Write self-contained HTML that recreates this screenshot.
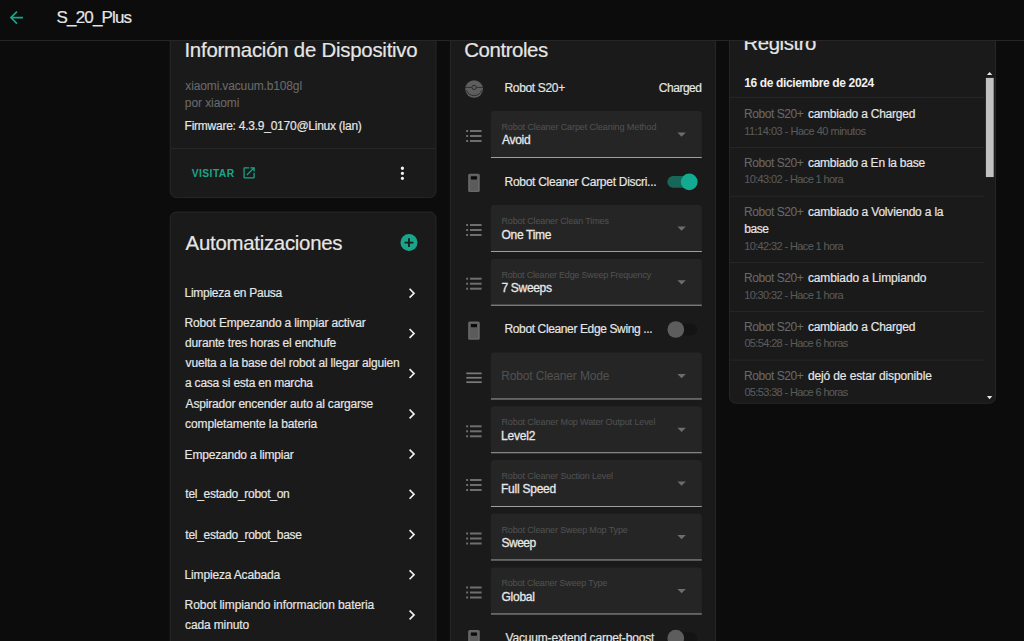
<!DOCTYPE html>
<html lang="es"><head><meta charset="utf-8"><title>S_20_Plus</title>
<style>
html,body{margin:0;padding:0;background:#0c0c0c;}
body{width:1024px;height:641px;overflow:hidden;position:relative;font-family:"Liberation Sans", sans-serif;color:#e6e6e6;font-size:12px;}
.abs,.card,.t,.sel,.hr{position:absolute;}
.t{white-space:nowrap;line-height:1;}
.card{background:#1a1a1a;border:1px solid #2b2b2b;border-radius:8px;box-sizing:border-box;}
.hdr{position:absolute;left:0;top:0;width:1024px;height:40px;background:#0c0c0c;border-bottom:1px solid #262626;z-index:5;}
.sel{left:491px;width:211px;height:46px;background:#262626;border-radius:4px 4px 0 0;border-bottom:1px solid #b4b4b4;box-sizing:content-box;}
.hr{height:1px;background:#2a2a2a;}
svg{position:absolute;overflow:visible;}

</style></head><body>
<svg style="left:0;top:0" width="1024" height="641" viewBox="0 0 1024 641"><rect x="170.22" y="10.42" width="265.76" height="187.16" rx="6.2" fill="#1a1a1a" stroke="#2b2b2b" stroke-width="0.84"/><rect x="170.22" y="212.02" width="265.76" height="487.56" rx="6.2" fill="#1a1a1a" stroke="#2b2b2b" stroke-width="0.84"/><rect x="450.42" y="10.42" width="265.16" height="689.16" rx="6.2" fill="#1a1a1a" stroke="#2b2b2b" stroke-width="0.84"/><rect x="729.52" y="10.42" width="265.96" height="392.86" rx="6.2" fill="#1a1a1a" stroke="#2b2b2b" stroke-width="0.84"/><rect x="170.60" y="148.00" width="265.00" height="0.84" fill="#2a2a2a"/><g transform="translate(241.56 165.26) scale(0.6279166666666667)"><path fill="#1aa58a" d="M14,3V5H17.59L7.76,14.83L9.17,16.24L19,6.41V10H21V3M19,19H5V5H12V3H5C3.89,3 3,3.9 3,5V19A2,2 0 0,0 5,21H19A2,2 0 0,0 21,19V12H19V19Z"/></g><g transform="translate(392.35 163.25) scale(0.8375)"><path fill="#f0f0f0" d="M12,16A2,2 0 0,1 14,18A2,2 0 0,1 12,20A2,2 0 0,1 10,18A2,2 0 0,1 12,16M12,10A2,2 0 0,1 14,12A2,2 0 0,1 12,14A2,2 0 0,1 10,12A2,2 0 0,1 12,10M12,4A2,2 0 0,1 14,6A2,2 0 0,1 12,8A2,2 0 0,1 10,6A2,2 0 0,1 12,4Z"/></g><g transform="translate(397.00 230.60) scale(1)"><circle cx="12" cy="12" r="8.5" fill="#1aa58a"/><path d="M12 7.6v8.8M7.6 12h8.8" stroke="#1a1a1a" stroke-width="1.8" fill="none"/></g><g transform="translate(401.80 283.15) scale(0.8375)"><path fill="#efefef" d="M8.59,16.58L13.17,12L8.59,7.41L10,6L16,12L10,18L8.59,16.58Z"/></g><g transform="translate(401.80 323.35) scale(0.8375)"><path fill="#efefef" d="M8.59,16.58L13.17,12L8.59,7.41L10,6L16,12L10,18L8.59,16.58Z"/></g><g transform="translate(401.80 363.55) scale(0.8375)"><path fill="#efefef" d="M8.59,16.58L13.17,12L8.59,7.41L10,6L16,12L10,18L8.59,16.58Z"/></g><g transform="translate(401.80 403.85) scale(0.8375)"><path fill="#efefef" d="M8.59,16.58L13.17,12L8.59,7.41L10,6L16,12L10,18L8.59,16.58Z"/></g><g transform="translate(401.80 444.05) scale(0.8375)"><path fill="#efefef" d="M8.59,16.58L13.17,12L8.59,7.41L10,6L16,12L10,18L8.59,16.58Z"/></g><g transform="translate(401.80 484.25) scale(0.8375)"><path fill="#efefef" d="M8.59,16.58L13.17,12L8.59,7.41L10,6L16,12L10,18L8.59,16.58Z"/></g><g transform="translate(401.80 524.55) scale(0.8375)"><path fill="#efefef" d="M8.59,16.58L13.17,12L8.59,7.41L10,6L16,12L10,18L8.59,16.58Z"/></g><g transform="translate(401.80 564.75) scale(0.8375)"><path fill="#efefef" d="M8.59,16.58L13.17,12L8.59,7.41L10,6L16,12L10,18L8.59,16.58Z"/></g><g transform="translate(401.80 604.95) scale(0.8375)"><path fill="#efefef" d="M8.59,16.58L13.17,12L8.59,7.41L10,6L16,12L10,18L8.59,16.58Z"/></g><g transform="translate(463.60 78.50) scale(0.875)"><circle cx="12" cy="12" r="10.1" fill="#5e5e5e"/><path d="M2 10.2H9.3M14.7 10.2H22" stroke="#1a1a1a" stroke-width=".75" fill="none"/><circle cx="12" cy="10.2" r="2.45" fill="none" stroke="#1a1a1a" stroke-width=".85"/><path d="M3.31 13.36A9.25 9.25 0 0 0 20.69 13.36" stroke="#1a1a1a" stroke-width=".8" fill="none"/></g><path fill="#252525" d="M490.9 157.90V114.40a3.4 3.4 0 0 1 3.4 -3.4H698.40a3.4 3.4 0 0 1 3.4 3.4V157.90z"/><rect x="490.90" y="157.05" width="210.90" height="0.84" fill="#b6b6b6"/><rect x="466.15" y="130.00" width="2.00" height="2.00" fill="#6e6e6e"/><rect x="470.00" y="130.00" width="11.60" height="2.00" fill="#6e6e6e"/><rect x="466.15" y="135.00" width="2.00" height="2.00" fill="#6e6e6e"/><rect x="470.00" y="135.00" width="11.60" height="2.00" fill="#6e6e6e"/><rect x="466.15" y="140.00" width="2.00" height="2.00" fill="#6e6e6e"/><rect x="470.00" y="140.00" width="11.60" height="2.00" fill="#6e6e6e"/><path fill="#6d6d6d" d="M677.4 132.50h8.4l-4.2 4.3z"/><rect x="468.15" y="173.70" width="11.60" height="18.40" fill="#676767" rx="1.6"/><rect x="469.95" y="175.50" width="8.00" height="15.00" fill="#5b5b5b"/><rect x="470.90" y="176.20" width="6.10" height="3.25" fill="#0b0b0b" rx="0.4"/><rect x="667.30" y="176.00" width="28.00" height="11.80" fill="#176759" rx="5.9"/><circle cx="689.25" cy="181.80" r="8.35" fill="#12ab92"/><path fill="#252525" d="M490.9 251.90V208.40a3.4 3.4 0 0 1 3.4 -3.4H698.40a3.4 3.4 0 0 1 3.4 3.4V251.90z"/><rect x="490.90" y="251.05" width="210.90" height="0.84" fill="#b6b6b6"/><rect x="466.15" y="224.00" width="2.00" height="2.00" fill="#6e6e6e"/><rect x="470.00" y="224.00" width="11.60" height="2.00" fill="#6e6e6e"/><rect x="466.15" y="229.00" width="2.00" height="2.00" fill="#6e6e6e"/><rect x="470.00" y="229.00" width="11.60" height="2.00" fill="#6e6e6e"/><rect x="466.15" y="234.00" width="2.00" height="2.00" fill="#6e6e6e"/><rect x="470.00" y="234.00" width="11.60" height="2.00" fill="#6e6e6e"/><path fill="#6d6d6d" d="M677.4 226.50h8.4l-4.2 4.3z"/><path fill="#252525" d="M490.9 305.60V262.10a3.4 3.4 0 0 1 3.4 -3.4H698.40a3.4 3.4 0 0 1 3.4 3.4V305.60z"/><rect x="490.90" y="304.75" width="210.90" height="0.84" fill="#b6b6b6"/><rect x="466.15" y="277.70" width="2.00" height="2.00" fill="#6e6e6e"/><rect x="470.00" y="277.70" width="11.60" height="2.00" fill="#6e6e6e"/><rect x="466.15" y="282.70" width="2.00" height="2.00" fill="#6e6e6e"/><rect x="470.00" y="282.70" width="11.60" height="2.00" fill="#6e6e6e"/><rect x="466.15" y="287.70" width="2.00" height="2.00" fill="#6e6e6e"/><rect x="470.00" y="287.70" width="11.60" height="2.00" fill="#6e6e6e"/><path fill="#6d6d6d" d="M677.4 280.20h8.4l-4.2 4.3z"/><rect x="468.15" y="321.40" width="11.60" height="18.40" fill="#676767" rx="1.6"/><rect x="469.95" y="323.20" width="8.00" height="15.00" fill="#5b5b5b"/><rect x="470.90" y="323.90" width="6.10" height="3.25" fill="#0b0b0b" rx="0.4"/><rect x="669.00" y="323.70" width="28.20" height="11.60" fill="#141414" rx="5.8"/><circle cx="675.8" cy="329.50" r="8.35" fill="#5d5d5d"/><path fill="#252525" d="M490.9 399.40V355.90a3.4 3.4 0 0 1 3.4 -3.4H698.40a3.4 3.4 0 0 1 3.4 3.4V399.40z"/><rect x="490.90" y="398.55" width="210.90" height="0.84" fill="#b6b6b6"/><rect x="466.30" y="372.50" width="15.40" height="1.75" fill="#7a7a7a"/><rect x="466.30" y="376.90" width="15.40" height="1.75" fill="#7a7a7a"/><rect x="466.30" y="381.30" width="15.40" height="1.75" fill="#7a7a7a"/><path fill="#6d6d6d" d="M677.4 374.00h8.4l-4.2 4.3z"/><path fill="#252525" d="M490.9 453.20V409.70a3.4 3.4 0 0 1 3.4 -3.4H698.40a3.4 3.4 0 0 1 3.4 3.4V453.20z"/><rect x="490.90" y="452.35" width="210.90" height="0.84" fill="#b6b6b6"/><rect x="466.15" y="425.30" width="2.00" height="2.00" fill="#6e6e6e"/><rect x="470.00" y="425.30" width="11.60" height="2.00" fill="#6e6e6e"/><rect x="466.15" y="430.30" width="2.00" height="2.00" fill="#6e6e6e"/><rect x="470.00" y="430.30" width="11.60" height="2.00" fill="#6e6e6e"/><rect x="466.15" y="435.30" width="2.00" height="2.00" fill="#6e6e6e"/><rect x="470.00" y="435.30" width="11.60" height="2.00" fill="#6e6e6e"/><path fill="#6d6d6d" d="M677.4 427.80h8.4l-4.2 4.3z"/><path fill="#252525" d="M490.9 506.90V463.40a3.4 3.4 0 0 1 3.4 -3.4H698.40a3.4 3.4 0 0 1 3.4 3.4V506.90z"/><rect x="490.90" y="506.05" width="210.90" height="0.84" fill="#b6b6b6"/><rect x="466.15" y="479.00" width="2.00" height="2.00" fill="#6e6e6e"/><rect x="470.00" y="479.00" width="11.60" height="2.00" fill="#6e6e6e"/><rect x="466.15" y="484.00" width="2.00" height="2.00" fill="#6e6e6e"/><rect x="470.00" y="484.00" width="11.60" height="2.00" fill="#6e6e6e"/><rect x="466.15" y="489.00" width="2.00" height="2.00" fill="#6e6e6e"/><rect x="470.00" y="489.00" width="11.60" height="2.00" fill="#6e6e6e"/><path fill="#6d6d6d" d="M677.4 481.50h8.4l-4.2 4.3z"/><path fill="#252525" d="M490.9 560.40V516.90a3.4 3.4 0 0 1 3.4 -3.4H698.40a3.4 3.4 0 0 1 3.4 3.4V560.40z"/><rect x="490.90" y="559.55" width="210.90" height="0.84" fill="#b6b6b6"/><rect x="466.15" y="532.50" width="2.00" height="2.00" fill="#6e6e6e"/><rect x="470.00" y="532.50" width="11.60" height="2.00" fill="#6e6e6e"/><rect x="466.15" y="537.50" width="2.00" height="2.00" fill="#6e6e6e"/><rect x="470.00" y="537.50" width="11.60" height="2.00" fill="#6e6e6e"/><rect x="466.15" y="542.50" width="2.00" height="2.00" fill="#6e6e6e"/><rect x="470.00" y="542.50" width="11.60" height="2.00" fill="#6e6e6e"/><path fill="#6d6d6d" d="M677.4 535.00h8.4l-4.2 4.3z"/><path fill="#252525" d="M490.9 614.40V570.90a3.4 3.4 0 0 1 3.4 -3.4H698.40a3.4 3.4 0 0 1 3.4 3.4V614.40z"/><rect x="490.90" y="613.55" width="210.90" height="0.84" fill="#b6b6b6"/><rect x="466.15" y="586.50" width="2.00" height="2.00" fill="#6e6e6e"/><rect x="470.00" y="586.50" width="11.60" height="2.00" fill="#6e6e6e"/><rect x="466.15" y="591.50" width="2.00" height="2.00" fill="#6e6e6e"/><rect x="470.00" y="591.50" width="11.60" height="2.00" fill="#6e6e6e"/><rect x="466.15" y="596.50" width="2.00" height="2.00" fill="#6e6e6e"/><rect x="470.00" y="596.50" width="11.60" height="2.00" fill="#6e6e6e"/><path fill="#6d6d6d" d="M677.4 589.00h8.4l-4.2 4.3z"/><rect x="468.15" y="630.00" width="11.60" height="18.40" fill="#676767" rx="1.6"/><rect x="469.95" y="631.80" width="8.00" height="15.00" fill="#5b5b5b"/><rect x="470.90" y="632.50" width="6.10" height="3.25" fill="#0b0b0b" rx="0.4"/><rect x="669.00" y="632.30" width="28.20" height="11.60" fill="#141414" rx="5.8"/><circle cx="675.8" cy="638.10" r="8.35" fill="#5d5d5d"/><rect x="729.90" y="96.88" width="254.30" height="0.84" fill="#2a2a2a"/><rect x="729.90" y="146.98" width="254.30" height="0.84" fill="#2a2a2a"/><rect x="729.90" y="195.78" width="254.30" height="0.84" fill="#2a2a2a"/><rect x="729.90" y="261.98" width="254.30" height="0.84" fill="#2a2a2a"/><rect x="729.90" y="310.88" width="254.30" height="0.84" fill="#2a2a2a"/><rect x="729.90" y="359.68" width="254.30" height="0.84" fill="#2a2a2a"/><rect x="985.90" y="77.90" width="7.80" height="99.15" fill="#c1c1c1"/><path fill="#e6e6e6" d="M986.9 75.1h5.4l-2.7-3.2z"/><path fill="#e6e6e6" d="M986.9 396h5.4l-2.7 3.2z"/></svg>
<div class="t" style="left:184.45px;top:39px;line-height:22px;font-size:20.4px;letter-spacing:-0.236px;color:#e6e6e6;-webkit-text-stroke:0.18px #e6e6e6;">Información de Dispositivo</div>
<div class="t" style="left:185.35px;top:79px;line-height:14px;font-size:12px;letter-spacing:-0.142px;color:#6a6a6a;-webkit-text-stroke:0.08px #6a6a6a;">xiaomi.vacuum.b108gl</div>
<div class="t" style="left:184.85px;top:96px;line-height:14px;font-size:12px;letter-spacing:-0.083px;color:#6a6a6a;-webkit-text-stroke:0.08px #6a6a6a;">por xiaomi</div>
<div class="t" style="left:184.60px;top:119px;line-height:14px;font-size:12px;letter-spacing:-0.247px;color:#e6e6e6;-webkit-text-stroke:0.18px #e6e6e6;">Firmware: 4.3.9_0170@Linux (lan)</div>
<div class="t" style="left:191.75px;top:168px;line-height:11px;font-size:10.3px;letter-spacing:0.425px;color:#1aa58a;font-weight:bold;">VISITAR</div>
<div class="t" style="left:185.60px;top:232px;line-height:22px;font-size:20.4px;letter-spacing:-0.270px;color:#e6e6e6;-webkit-text-stroke:0.18px #e6e6e6;">Automatizaciones</div>
<div class="t" style="left:184.60px;top:286px;line-height:14px;font-size:12px;letter-spacing:-0.281px;color:#e6e6e6;-webkit-text-stroke:0.18px #e6e6e6;">Limpieza en Pausa</div>
<div class="t" style="left:184.60px;top:316px;line-height:14px;font-size:12px;letter-spacing:-0.172px;color:#e6e6e6;-webkit-text-stroke:0.18px #e6e6e6;">Robot Empezando a limpiar activar</div>
<div class="t" style="left:185.10px;top:336px;line-height:14px;font-size:12px;letter-spacing:-0.175px;color:#e6e6e6;-webkit-text-stroke:0.18px #e6e6e6;">durante tres horas el enchufe</div>
<div class="t" style="left:185.60px;top:356px;line-height:14px;font-size:12px;letter-spacing:-0.171px;color:#e6e6e6;-webkit-text-stroke:0.18px #e6e6e6;">vuelta a la base del robot al llegar alguien</div>
<div class="t" style="left:185.10px;top:376px;line-height:14px;font-size:12px;letter-spacing:-0.239px;color:#e6e6e6;-webkit-text-stroke:0.18px #e6e6e6;">a casa si esta en marcha</div>
<div class="t" style="left:185.60px;top:397px;line-height:14px;font-size:12px;letter-spacing:-0.191px;color:#e6e6e6;-webkit-text-stroke:0.18px #e6e6e6;">Aspirador encender auto al cargarse</div>
<div class="t" style="left:185.10px;top:417px;line-height:14px;font-size:12px;letter-spacing:-0.115px;color:#e6e6e6;-webkit-text-stroke:0.18px #e6e6e6;">completamente la bateria</div>
<div class="t" style="left:184.60px;top:448px;line-height:14px;font-size:12px;letter-spacing:-0.200px;color:#e6e6e6;-webkit-text-stroke:0.18px #e6e6e6;">Empezando a limpiar</div>
<div class="t" style="left:185.35px;top:487px;line-height:14px;font-size:12px;letter-spacing:-0.278px;color:#e6e6e6;-webkit-text-stroke:0.18px #e6e6e6;">tel_estado_robot_on</div>
<div class="t" style="left:185.35px;top:528px;line-height:14px;font-size:12px;letter-spacing:-0.272px;color:#e6e6e6;-webkit-text-stroke:0.18px #e6e6e6;">tel_estado_robot_base</div>
<div class="t" style="left:184.60px;top:568px;line-height:14px;font-size:12px;letter-spacing:-0.173px;color:#e6e6e6;-webkit-text-stroke:0.18px #e6e6e6;">Limpieza Acabada</div>
<div class="t" style="left:184.60px;top:598px;line-height:14px;font-size:12px;letter-spacing:-0.072px;color:#e6e6e6;-webkit-text-stroke:0.18px #e6e6e6;">Robot limpiando informacion bateria</div>
<div class="t" style="left:185.10px;top:618px;line-height:14px;font-size:12px;letter-spacing:-0.140px;color:#e6e6e6;-webkit-text-stroke:0.18px #e6e6e6;">cada minuto</div>
<div class="t" style="left:464.30px;top:39px;line-height:22px;font-size:20.4px;letter-spacing:-0.425px;color:#e6e6e6;-webkit-text-stroke:0.18px #e6e6e6;">Controles</div>
<div class="t" style="left:504.50px;top:81px;line-height:14px;font-size:12px;letter-spacing:-0.339px;color:#e6e6e6;-webkit-text-stroke:0.18px #e6e6e6;">Robot S20+</div>
<div class="t" style="left:658.80px;top:81px;line-height:14px;font-size:12px;letter-spacing:-0.475px;color:#e6e6e6;-webkit-text-stroke:0.18px #e6e6e6;">Charged</div>
<div class="t" style="left:501.45px;top:122px;line-height:10px;font-size:9px;letter-spacing:-0.090px;color:#505050;-webkit-text-stroke:0.08px #505050;">Robot Cleaner Carpet Cleaning Method</div>
<div class="t" style="left:502.00px;top:133px;line-height:14px;font-size:12px;letter-spacing:-0.300px;color:#e8e8e8;-webkit-text-stroke:0.3px #e8e8e8;">Avoid</div>
<div class="t" style="left:504.50px;top:175px;line-height:14px;font-size:12px;letter-spacing:-0.276px;color:#e6e6e6;-webkit-text-stroke:0.18px #e6e6e6;">Robot Cleaner Carpet Discri...</div>
<div class="t" style="left:501.45px;top:216px;line-height:10px;font-size:9px;letter-spacing:-0.125px;color:#505050;-webkit-text-stroke:0.08px #505050;">Robot Cleaner Clean Times</div>
<div class="t" style="left:501.50px;top:228px;line-height:14px;font-size:12px;letter-spacing:-0.300px;color:#e8e8e8;-webkit-text-stroke:0.3px #e8e8e8;">One Time</div>
<div class="t" style="left:501.45px;top:270px;line-height:10px;font-size:9px;letter-spacing:-0.208px;color:#505050;-webkit-text-stroke:0.08px #505050;">Robot Cleaner Edge Sweep Frequency</div>
<div class="t" style="left:501.50px;top:281px;line-height:14px;font-size:12px;letter-spacing:-0.321px;color:#e8e8e8;-webkit-text-stroke:0.3px #e8e8e8;">7 Sweeps</div>
<div class="t" style="left:504.50px;top:322px;line-height:14px;font-size:12px;letter-spacing:-0.374px;color:#e6e6e6;-webkit-text-stroke:0.18px #e6e6e6;">Robot Cleaner Edge Swing ...</div>
<div class="t" style="left:501.20px;top:369px;line-height:14px;font-size:12px;letter-spacing:-0.144px;color:#505050;-webkit-text-stroke:0.08px #505050;">Robot Cleaner Mode</div>
<div class="t" style="left:501.45px;top:417px;line-height:10px;font-size:9px;letter-spacing:-0.106px;color:#505050;-webkit-text-stroke:0.08px #505050;">Robot Cleaner Mop Water Output Level</div>
<div class="t" style="left:501.00px;top:429px;line-height:14px;font-size:12px;letter-spacing:-0.190px;color:#e8e8e8;-webkit-text-stroke:0.3px #e8e8e8;">Level2</div>
<div class="t" style="left:501.45px;top:471px;line-height:10px;font-size:9px;letter-spacing:-0.113px;color:#505050;-webkit-text-stroke:0.08px #505050;">Robot Cleaner Suction Level</div>
<div class="t" style="left:501.00px;top:482px;line-height:14px;font-size:12px;letter-spacing:-0.244px;color:#e8e8e8;-webkit-text-stroke:0.3px #e8e8e8;">Full Speed</div>
<div class="t" style="left:501.45px;top:525px;line-height:10px;font-size:9px;letter-spacing:-0.131px;color:#505050;-webkit-text-stroke:0.08px #505050;">Robot Cleaner Sweep Mop Type</div>
<div class="t" style="left:501.50px;top:536px;line-height:14px;font-size:12px;letter-spacing:-0.512px;color:#e8e8e8;-webkit-text-stroke:0.3px #e8e8e8;">Sweep</div>
<div class="t" style="left:501.45px;top:578px;line-height:10px;font-size:9px;letter-spacing:-0.176px;color:#505050;-webkit-text-stroke:0.08px #505050;">Robot Cleaner Sweep Type</div>
<div class="t" style="left:501.50px;top:590px;line-height:14px;font-size:12px;letter-spacing:-0.260px;color:#e8e8e8;-webkit-text-stroke:0.3px #e8e8e8;">Global</div>
<div class="t" style="left:505.50px;top:631px;line-height:14px;font-size:12px;letter-spacing:-0.174px;color:#e6e6e6;-webkit-text-stroke:0.18px #e6e6e6;">Vacuum-extend carpet-boost</div>
<div class="t" style="left:743.55px;top:32px;line-height:22px;font-size:20.4px;letter-spacing:-0.450px;color:#e6e6e6;-webkit-text-stroke:0.18px #e6e6e6;">Registro</div>
<div class="t" style="left:744.15px;top:76px;line-height:14px;font-size:12px;letter-spacing:-0.366px;color:#f0f0f0;font-weight:bold;">16 de diciembre de 2024</div>
<div class="t" style="left:743.90px;top:107px;line-height:14px;font-size:12px;letter-spacing:-0.417px;color:#686868;-webkit-text-stroke:0.08px #686868;">Robot S20+</div>
<div class="t" style="left:807.90px;top:107px;line-height:14px;font-size:12px;letter-spacing:-0.232px;color:#e6e6e6;-webkit-text-stroke:0.18px #e6e6e6;">cambiado a Charged</div>
<div class="t" style="left:744.15px;top:125px;line-height:12px;font-size:11px;letter-spacing:-0.498px;color:#5a5a5a;-webkit-text-stroke:0.08px #5a5a5a;">11:14:03 - Hace 40 minutos</div>
<div class="t" style="left:743.90px;top:156px;line-height:14px;font-size:12px;letter-spacing:-0.417px;color:#686868;-webkit-text-stroke:0.08px #686868;">Robot S20+</div>
<div class="t" style="left:807.90px;top:156px;line-height:14px;font-size:12px;letter-spacing:-0.240px;color:#e6e6e6;-webkit-text-stroke:0.18px #e6e6e6;">cambiado a En la base</div>
<div class="t" style="left:744.15px;top:173px;line-height:12px;font-size:11px;letter-spacing:-0.617px;color:#5a5a5a;-webkit-text-stroke:0.08px #5a5a5a;">10:43:02 - Hace 1 hora</div>
<div class="t" style="left:743.90px;top:205px;line-height:14px;font-size:12px;letter-spacing:-0.417px;color:#686868;-webkit-text-stroke:0.08px #686868;">Robot S20+</div>
<div class="t" style="left:807.90px;top:205px;line-height:14px;font-size:12px;letter-spacing:-0.185px;color:#e6e6e6;-webkit-text-stroke:0.18px #e6e6e6;">cambiado a Volviendo a la</div>
<div class="t" style="left:744.15px;top:222px;line-height:14px;font-size:12px;letter-spacing:-0.383px;color:#e6e6e6;-webkit-text-stroke:0.18px #e6e6e6;">base</div>
<div class="t" style="left:744.15px;top:240px;line-height:12px;font-size:11px;letter-spacing:-0.617px;color:#5a5a5a;-webkit-text-stroke:0.08px #5a5a5a;">10:42:32 - Hace 1 hora</div>
<div class="t" style="left:743.90px;top:271px;line-height:14px;font-size:12px;letter-spacing:-0.417px;color:#686868;-webkit-text-stroke:0.08px #686868;">Robot S20+</div>
<div class="t" style="left:807.90px;top:271px;line-height:14px;font-size:12px;letter-spacing:-0.113px;color:#e6e6e6;-webkit-text-stroke:0.18px #e6e6e6;">cambiado a Limpiando</div>
<div class="t" style="left:744.15px;top:289px;line-height:12px;font-size:11px;letter-spacing:-0.617px;color:#5a5a5a;-webkit-text-stroke:0.08px #5a5a5a;">10:30:32 - Hace 1 hora</div>
<div class="t" style="left:743.90px;top:320px;line-height:14px;font-size:12px;letter-spacing:-0.417px;color:#686868;-webkit-text-stroke:0.08px #686868;">Robot S20+</div>
<div class="t" style="left:807.90px;top:320px;line-height:14px;font-size:12px;letter-spacing:-0.232px;color:#e6e6e6;-webkit-text-stroke:0.18px #e6e6e6;">cambiado a Charged</div>
<div class="t" style="left:744.40px;top:337px;line-height:12px;font-size:11px;letter-spacing:-0.639px;color:#5a5a5a;-webkit-text-stroke:0.08px #5a5a5a;">05:54:28 - Hace 6 horas</div>
<div class="t" style="left:743.90px;top:369px;line-height:14px;font-size:12px;letter-spacing:-0.417px;color:#686868;-webkit-text-stroke:0.08px #686868;">Robot S20+</div>
<div class="t" style="left:807.90px;top:369px;line-height:14px;font-size:12px;letter-spacing:-0.120px;color:#e6e6e6;-webkit-text-stroke:0.18px #e6e6e6;">dejó de estar disponible</div>
<div class="t" style="left:744.40px;top:386px;line-height:12px;font-size:11px;letter-spacing:-0.639px;color:#5a5a5a;-webkit-text-stroke:0.08px #5a5a5a;">05:53:38 - Hace 6 horas</div>
<div class="hdr"></div>
<svg style="left:0;top:0;z-index:6" width="40" height="40" viewBox="0 0 40 40"><g transform="translate(6.25 7.55) scale(0.8375)"><path fill="#1aa58a" d="M20,11V13H8L13.5,18.5L12.08,19.92L4.16,12L12.08,4.08L13.5,5.5L8,11H20Z"/></g></svg>
<div class="t" style="left:56.55px;top:8px;line-height:19px;font-size:17px;letter-spacing:-0.838px;color:#e6e6e6;z-index:6;-webkit-text-stroke:0.18px #e6e6e6;">S_20_Plus</div>
</body></html>
